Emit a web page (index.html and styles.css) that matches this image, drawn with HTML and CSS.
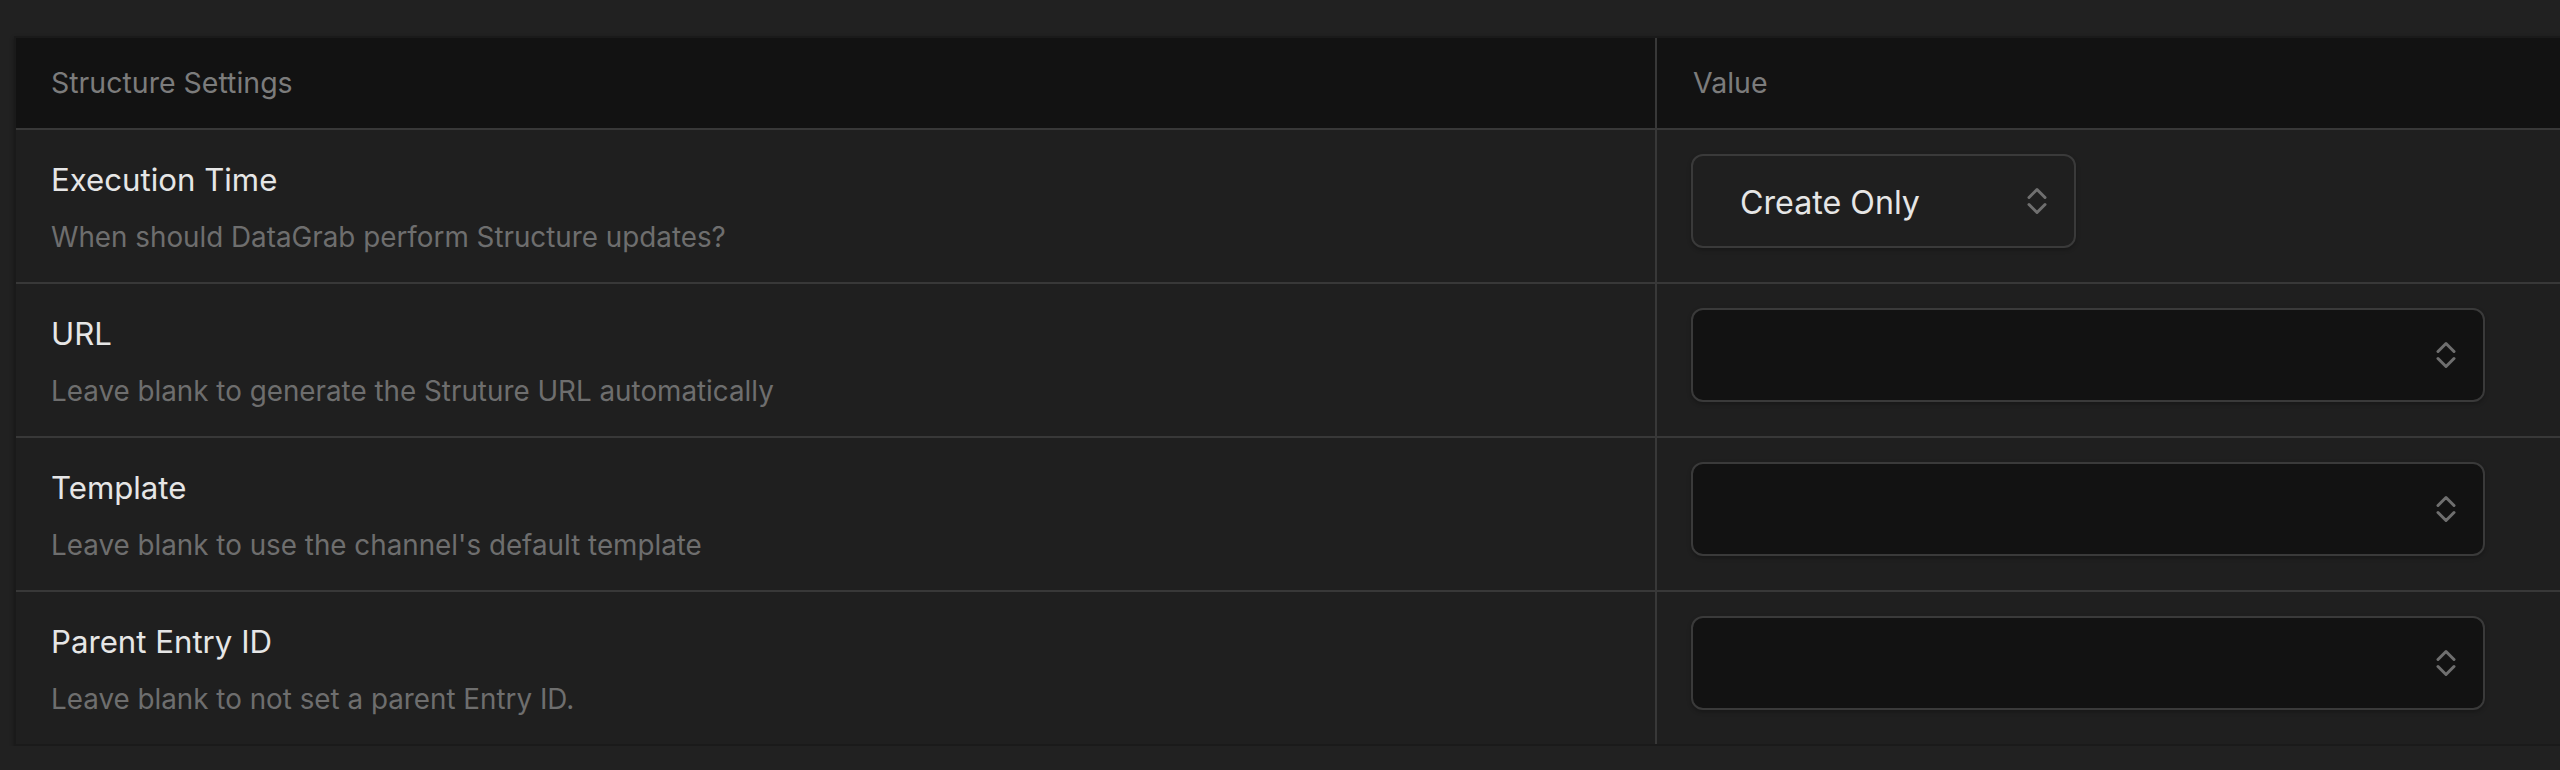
FILE: index.html
```html
<!DOCTYPE html>
<html>
<head>
    <title>Structure Settings</title>
    <link rel="stylesheet" href="styles.css">
</head>
<body>

<div class="settings-table">
    <div class="settings-row settings-head">
        <div class="cell cell-name">Structure Settings</div>
        <div class="cell cell-value">Value</div>
    </div>

    <div class="settings-row">
        <div class="cell cell-name">
            <div class="field-label">Execution Time</div>
            <div class="field-desc">When should DataGrab perform Structure updates?</div>
        </div>
        <div class="cell cell-value">
            <div class="select select-filled">
                <span class="select-text">Create Only</span>
                <svg class="select-arrows" width="20" height="28" viewBox="0 0 20 28"><path d="M2 10.5 L10 2.5 L18 10.5 M2 17.5 L10 25.5 L18 17.5"/></svg>
            </div>
        </div>
    </div>

    <div class="settings-row">
        <div class="cell cell-name">
            <div class="field-label">URL</div>
            <div class="field-desc">Leave blank to generate the Struture URL automatically</div>
        </div>
        <div class="cell cell-value">
            <div class="select select-empty">
                <span class="select-text"></span>
                <svg class="select-arrows" width="20" height="28" viewBox="0 0 20 28"><path d="M2 10.5 L10 2.5 L18 10.5 M2 17.5 L10 25.5 L18 17.5"/></svg>
            </div>
        </div>
    </div>

    <div class="settings-row">
        <div class="cell cell-name">
            <div class="field-label">Template</div>
            <div class="field-desc">Leave blank to use the channel's default template</div>
        </div>
        <div class="cell cell-value">
            <div class="select select-empty">
                <span class="select-text"></span>
                <svg class="select-arrows" width="20" height="28" viewBox="0 0 20 28"><path d="M2 10.5 L10 2.5 L18 10.5 M2 17.5 L10 25.5 L18 17.5"/></svg>
            </div>
        </div>
    </div>

    <div class="settings-row">
        <div class="cell cell-name">
            <div class="field-label">Parent Entry ID</div>
            <div class="field-desc">Leave blank to not set a parent Entry ID.</div>
        </div>
        <div class="cell cell-value">
            <div class="select select-empty">
                <span class="select-text"></span>
                <svg class="select-arrows" width="20" height="28" viewBox="0 0 20 28"><path d="M2 10.5 L10 2.5 L18 10.5 M2 17.5 L10 25.5 L18 17.5"/></svg>
            </div>
        </div>
    </div>
</div>

</body>
</html>
```

FILE: styles.css
```css
body {
    margin: 0;
    background-color: #212121;
    font-family: Inter, "Liberation Sans", sans-serif;
    overflow: hidden;
}

.settings-table {
    margin: 36px -40px 0 14px;
    border: 2px solid #1a1a1a;
    background-color: #1f1f1f;
    box-shadow: 0 2px 4px rgba(0, 0, 0, 0.35);
}

.settings-row {
    display: grid;
    grid-template-columns: 1639px 1fr;
    height: 152px;
    border-bottom: 2px solid #383838;
}

.settings-row:last-child {
    border-bottom: none;
}

.settings-head {
    height: 90px;
    background-color: #121212;
}

.cell {
    padding-left: 35px;
}

.cell-value {
    border-left: 2px solid #383838;
    padding-left: 34px;
    padding-top: 24px;
}

.settings-head .cell {
    font-size: 28.5px;
    line-height: 90px;
    color: #7c7c7c;
}

.settings-head .cell-value {
    padding-left: 36px;
    padding-top: 0;
}

.field-label {
    padding-top: 30px;
    font-size: 31.2px;
    line-height: 40px;
    color: #e6e6e6;
}

.field-desc {
    margin-top: 17px;
    font-size: 27.8px;
    line-height: 40px;
    color: #6e6e6e;
}

.select {
    display: flex;
    align-items: center;
    justify-content: space-between;
    box-sizing: border-box;
    height: 94px;
    padding: 0 27px 0 47px;
    border: 2px solid #3a3a3a;
    border-radius: 12px;
    box-shadow: 0 2px 4px rgba(0, 0, 0, 0.25);
}

.select-text {
    margin-top: 2px;
}

.select-filled {
    width: 385px;
    background-color: #1f1f1f;
    font-size: 32.2px;
    color: #e6e6e6;
}

.select-empty {
    width: 794px;
    background-color: #121212;
}

.select-arrows path {
    fill: none;
    stroke: #6f6f6f;
    stroke-width: 3;
    stroke-linecap: round;
    stroke-linejoin: round;
}
```
